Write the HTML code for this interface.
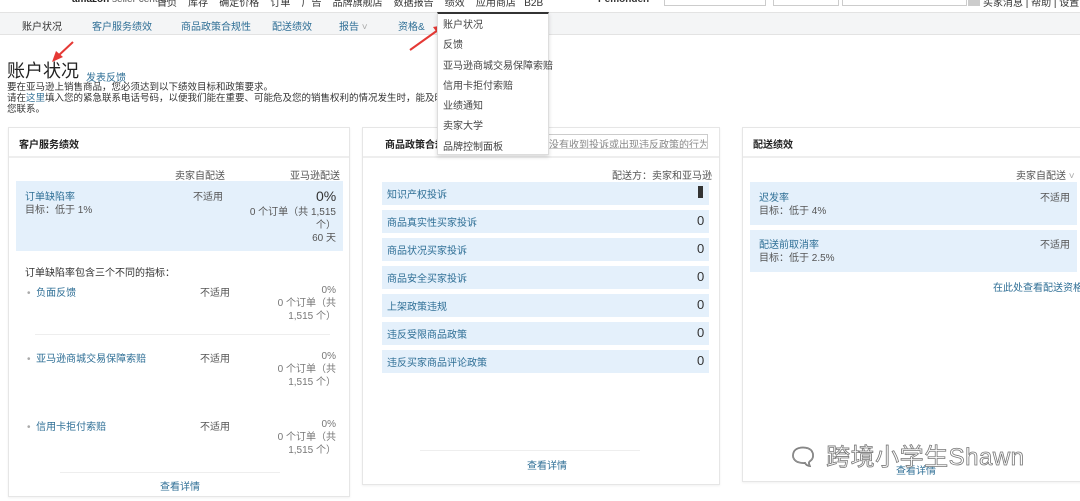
<!DOCTYPE html>
<html><head><meta charset="utf-8">
<style>
*{margin:0;padding:0;box-sizing:border-box}
body{width:1080px;height:501px;overflow:hidden;background:#fff;font-family:"Liberation Sans","Noto Sans CJK SC",sans-serif;font-size:10px;color:#555;position:relative}
.a{position:absolute;white-space:nowrap}
.lk{color:#2f6f96}
.panel{position:absolute;border:1px solid #e6e6e6;background:#fff;box-shadow:0 1px 2px rgba(0,0,0,.06)}
.ph{position:absolute;left:0;right:0;top:0;height:30px;border-bottom:2px solid #eee;font-weight:bold;color:#222;font-size:10px;padding:8px 0 0 10px}
.hl{position:absolute;background:#e4f0fb}
</style></head><body>
<!-- top bar -->
<div class="a" style="left:0;top:-6px;width:1080px;height:13px;color:#333;font-size:10px">
 <span class="a" style="left:72px;font-weight:bold;color:#222">amazon <span style="font-weight:normal;color:#555">seller central</span></span>
 <span class="a" style="left:157px">首页 &nbsp;&nbsp; 库存 &nbsp;&nbsp; 确定价格 &nbsp;&nbsp; 订单 &nbsp;&nbsp; 广告 &nbsp;&nbsp; 品牌旗舰店 &nbsp;&nbsp; 数据报告 &nbsp;&nbsp; 绩效 &nbsp;&nbsp; 应用商店 &nbsp; B2B</span>
 <span class="a" style="left:598px;font-weight:bold">Pemonden</span>
 <span class="a" style="left:664px;border:1px solid #ccc;width:102px;height:12px;top:0"></span>
 <span class="a" style="left:773px;border:1px solid #ccc;width:66px;height:12px;top:0"></span>
 <span class="a" style="left:842px;border:1px solid #ccc;width:125px;height:12px;top:0"></span>
 <span class="a" style="left:968px;background:#ccc;width:12px;height:12px;top:0"></span>
 <span class="a" style="left:983px">买家消息 | 帮助 | 设置</span>
</div>
<div class="a" style="left:0;top:12px;width:1080px;height:23px;background:#f4f5f6;border-top:1px solid #e3e3e3;border-bottom:1px solid #e3e3e3"></div>
<div class="a" style="left:22px;top:18px;color:#333">账户状况</div>
<div class="a lk" style="left:92px;top:18px">客户服务绩效</div>
<div class="a lk" style="left:181px;top:18px">商品政策合规性</div>
<div class="a lk" style="left:272px;top:18px">配送绩效</div>
<div class="a lk" style="left:339px;top:18px">报告 <span style="color:#aaa">˅</span></div>
<div class="a lk" style="left:398px;top:18px">资格&</div>
<!-- title -->
<div class="a" style="left:7px;top:60px;font-size:18px;line-height:22px;color:#222">账户状况</div>
<div class="a lk" style="left:86px;top:69px">发表反馈</div>
<div class="a" style="left:7px;top:82px;color:#333;line-height:11px;font-size:9.5px">要在亚马逊上销售商品，您必须达到以下绩效目标和政策要求。<br>请在<span class="lk">这里</span>填入您的紧急联系电话号码，以便我们能在重要、可能危及您的销售权利的情况发生时，能及时与<br>您联系。</div>
<!-- arrows -->
<svg class="a" style="left:0;top:0" width="460" height="80"><g fill="#e53935" stroke="#e53935"><line x1="73" y1="42" x2="58" y2="56" stroke-width="2"/><polygon points="52,62 56,51 63,57" stroke="none"/><line x1="410" y1="50" x2="438" y2="30" stroke-width="2"/><polygon points="445,25 433,27 438,34" stroke="none"/></g></svg>
<!-- panel 1 -->
<div class="panel" style="left:8px;top:127px;width:342px;height:370px">
 <div class="ph">客户服务绩效</div>
</div>
<div class="a" style="left:175px;top:167px">卖家自配送</div>
<div class="a" style="left:290px;top:167px">亚马逊配送</div>
<div class="hl" style="left:16px;top:181px;width:327px;height:70px"></div>
<div class="a lk" style="left:25px;top:188px">订单缺陷率</div>
<div class="a" style="left:25px;top:201px">目标：低于 1%</div>
<div class="a" style="left:193px;top:188px">不适用</div>
<div class="a" style="left:316px;top:188px;font-size:14px;color:#333">0%</div>
<div class="a" style="left:240px;top:206px;text-align:right;width:96px;line-height:13px">0 个订单（共 1,515<br>个）<br>60 天</div>
<div class="a" style="left:25px;top:264px;color:#333">订单缺陷率包含三个不同的指标：</div>
<div class="a" style="left:27px;top:284px"><span style="color:#aaa">•</span> &nbsp;<span class="lk">负面反馈</span></div>
<div class="a" style="left:200px;top:284px">不适用</div>
<div class="a" style="left:260px;top:284px;width:76px;text-align:right;line-height:13px;color:#777">0%<br>0 个订单（共<br>1,515 个）</div>
<div class="a" style="left:35px;top:334px;width:295px;border-top:1px solid #eee"></div>
<div class="a" style="left:27px;top:350px"><span style="color:#aaa">•</span> &nbsp;<span class="lk">亚马逊商城交易保障索赔</span></div>
<div class="a" style="left:200px;top:350px">不适用</div>
<div class="a" style="left:260px;top:350px;width:76px;text-align:right;line-height:13px;color:#777">0%<br>0 个订单（共<br>1,515 个）</div>
<div class="a" style="left:27px;top:418px"><span style="color:#aaa">•</span> &nbsp;<span class="lk">信用卡拒付索赔</span></div>
<div class="a" style="left:200px;top:418px">不适用</div>
<div class="a" style="left:260px;top:418px;width:76px;text-align:right;line-height:13px;color:#777">0%<br>0 个订单（共<br>1,515 个）</div>
<div class="a" style="left:60px;top:472px;width:220px;border-top:1px solid #eee"></div>
<div class="a lk" style="left:160px;top:478px">查看详情</div>
<!-- panel 2 -->
<div class="panel" style="left:362px;top:127px;width:358px;height:358px">
 <div class="ph" style="padding-left:22px">商品政策合规</div>
</div>
<div class="a" style="left:545px;top:134px;width:163px;height:15px;border:1px solid #ccc;color:#888;padding:1px 3px;overflow:hidden">没有收到投诉或出现违反政策的行为</div>
<div class="a" style="left:612px;top:167px">配送方：卖家和亚马逊</div>
<div class="hl" style="left:382px;top:182px;width:327px;height:23px"></div>
<div class="a lk" style="left:387px;top:186px">知识产权投诉</div>
<div class="a" style="left:698px;top:186px;width:5px;height:12px;background:#333"></div>
<div class="hl" style="left:382px;top:210px;width:327px;height:23px"></div><div class="a lk" style="left:387px;top:214px">商品真实性买家投诉</div><div class="a" style="left:697px;top:213px;font-size:13px;color:#333">0</div>
<div class="hl" style="left:382px;top:238px;width:327px;height:23px"></div><div class="a lk" style="left:387px;top:242px">商品状况买家投诉</div><div class="a" style="left:697px;top:241px;font-size:13px;color:#333">0</div>
<div class="hl" style="left:382px;top:266px;width:327px;height:23px"></div><div class="a lk" style="left:387px;top:270px">商品安全买家投诉</div><div class="a" style="left:697px;top:269px;font-size:13px;color:#333">0</div>
<div class="hl" style="left:382px;top:294px;width:327px;height:23px"></div><div class="a lk" style="left:387px;top:298px">上架政策违规</div><div class="a" style="left:697px;top:297px;font-size:13px;color:#333">0</div>
<div class="hl" style="left:382px;top:322px;width:327px;height:23px"></div><div class="a lk" style="left:387px;top:326px">违反受限商品政策</div><div class="a" style="left:697px;top:325px;font-size:13px;color:#333">0</div>
<div class="hl" style="left:382px;top:350px;width:327px;height:23px"></div><div class="a lk" style="left:387px;top:354px">违反买家商品评论政策</div><div class="a" style="left:697px;top:353px;font-size:13px;color:#333">0</div>
<div class="a" style="left:420px;top:450px;width:220px;border-top:1px solid #eee"></div>
<div class="a lk" style="left:527px;top:457px">查看详情</div>
<!-- panel 3 -->
<div class="panel" style="left:742px;top:127px;width:345px;height:355px">
 <div class="ph">配送绩效</div>
</div>
<div class="a" style="left:1016px;top:167px">卖家自配送 <span style="color:#aaa">˅</span></div>
<div class="hl" style="left:750px;top:182px;width:327px;height:43px"></div>
<div class="a lk" style="left:759px;top:189px">迟发率</div>
<div class="a" style="left:759px;top:202px">目标：低于 4%</div>
<div class="a" style="left:1040px;top:189px">不适用</div>
<div class="hl" style="left:750px;top:230px;width:327px;height:42px"></div>
<div class="a lk" style="left:759px;top:236px">配送前取消率</div>
<div class="a" style="left:759px;top:249px">目标：低于 2.5%</div>
<div class="a" style="left:1040px;top:236px">不适用</div>
<div class="a lk" style="left:993px;top:279px">在此处查看配送资格</div>
<div class="a lk" style="left:896px;top:462px">查看详情</div>
<!-- watermark -->
<div class="a" style="left:788px;top:437px;font-size:24px;color:#fff;-webkit-text-stroke:0.8px #777;letter-spacing:0.5px">🗨 跨境小学生Shawn</div>
<!-- dropdown -->
<div class="a" style="left:437px;top:12px;width:112px;height:143px;background:#fff;border:1px solid #ddd;box-shadow:0 2px 4px rgba(0,0,0,.15);border-top:2px solid #333;color:#444;line-height:20.3px;padding:2px 0 0 5px">账户状况<br>反馈<br>亚马逊商城交易保障索赔<br>信用卡拒付索赔<br>业绩通知<br>卖家大学<br>品牌控制面板</div>
</body></html>
